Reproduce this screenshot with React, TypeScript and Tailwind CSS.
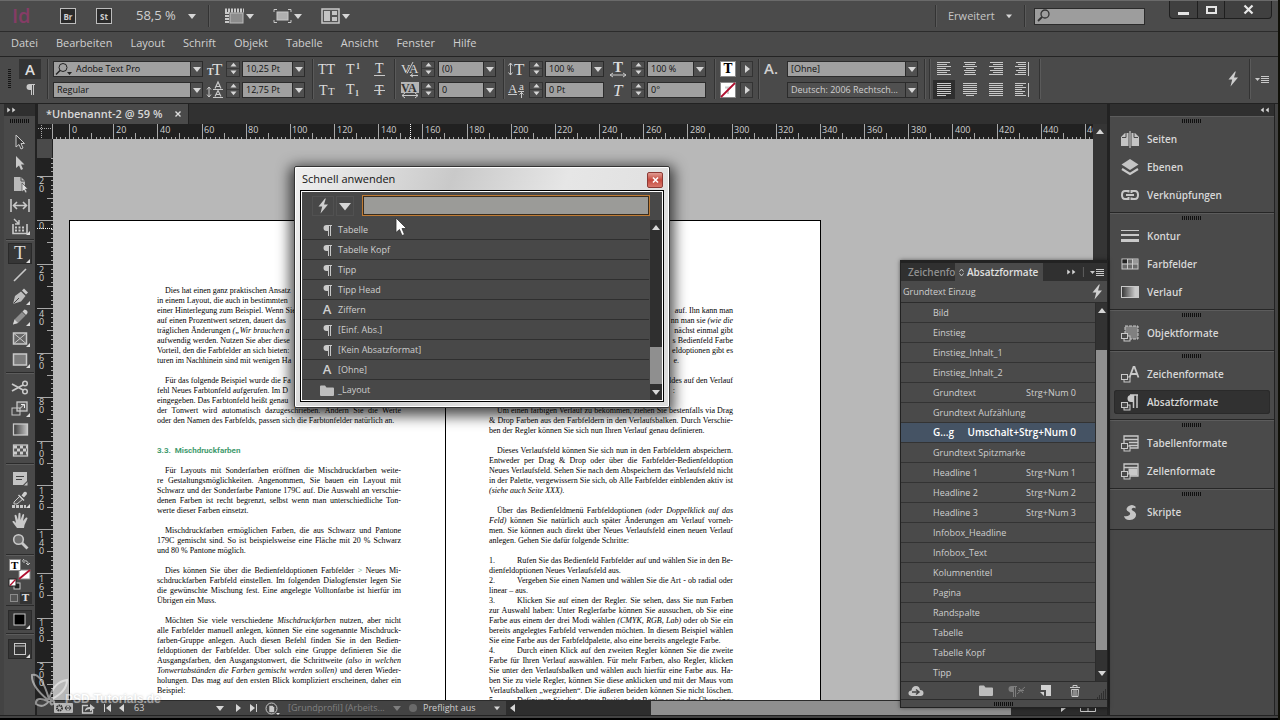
import type { ReactNode } from "react";
import clsx from "clsx";

const RULER_STEP = 2.2085;

const menus = ["Datei", "Bearbeiten", "Layout", "Schrift", "Objekt", "Tabelle", "Ansicht", "Fenster", "Hilfe"];

const quickApply = [
  { kind: "para", name: "Tabelle" },
  { kind: "para", name: "Tabelle Kopf" },
  { kind: "para", name: "Tipp" },
  { kind: "para", name: "Tipp Head" },
  { kind: "char", name: "Ziffern" },
  { kind: "para", name: "[Einf. Abs.]" },
  { kind: "para", name: "[Kein Absatzformat]" },
  { kind: "char", name: "[Ohne]" },
  { kind: "folder", name: "_Layout" },
];

const styles: { name: string; keys?: string; active?: boolean }[] = [
  { name: "Bild" },
  { name: "Einstieg" },
  { name: "Einstieg_Inhalt_1" },
  { name: "Einstieg_Inhalt_2" },
  { name: "Grundtext", keys: "Strg+Num 0" },
  { name: "Grundtext Aufzählung" },
  { name: "G...g", keys: "Umschalt+Strg+Num 0", active: true },
  { name: "Grundtext Spitzmarke" },
  { name: "Headline 1", keys: "Strg+Num 1" },
  { name: "Headline 2", keys: "Strg+Num 2" },
  { name: "Headline 3", keys: "Strg+Num 3" },
  { name: "Infobox_Headline" },
  { name: "Infobox_Text" },
  { name: "Kolumnentitel" },
  { name: "Pagina" },
  { name: "Randspalte" },
  { name: "Tabelle" },
  { name: "Tabelle Kopf" },
  { name: "Tipp" },
];

/* ---------- small drawings ---------- */

type Dir = "up" | "down" | "left" | "right";

const triPoints: Record<Dir, string> = {
  up: "0,6 4,1 8,6",
  down: "0,2 8,2 4,7",
  left: "6,0 6,8 1,4",
  right: "2,0 2,8 7,4",
};

function Tri({ dir, className = "h-2 w-2" }: { dir: Dir; className?: string }) {
  return (
    <svg viewBox="0 0 8 8" className={clsx("shrink-0 fill-[#d6d6d6]", className)} aria-hidden>
      <polygon points={triPoints[dir]} />
    </svg>
  );
}

function Icon({ w, h, className, children }: { w: number; h: number; className?: string; children: ReactNode }) {
  return (
    <svg
      width={w}
      height={h}
      viewBox={`0 0 ${w} ${h}`}
      className={clsx("shrink-0 overflow-visible", className)}
      fill="none"
      stroke="#c9c9c9"
      aria-hidden
    >
      {children}
    </svg>
  );
}

function Grip() {
  return <div className="h-[4px] w-[20px] bg-[repeating-linear-gradient(90deg,#101010_0_1px,transparent_1px_2px)]" />;
}

function Bolt() {
  return (
    <Icon w={12} h={16}>
      <path d="M8 0.500 L1.500 8.500 L5.200 8.500 L3.500 15.500 L11 6.500 L7 6.500 L8.800 0.500 Z" fill="#cfcfcf" stroke="none" />
    </Icon>
  );
}

function Pilcrow() {
  return (
    <Icon w={9} h={12}>
      <path d="M5 1 H3.500 A3 3 0 0 0 3.500 7 H5 Z" fill="#c9c9c9" stroke="none" />
      <path d="M3.500 1.500 H9 M5.500 1 V12 M7.500 1 V12" shapeRendering="crispEdges" />
    </Icon>
  );
}

function Folder() {
  return (
    <Icon w={14} h={11}>
      <path d="M0 10 V1.500 Q0 .5 1 .5 H5 L6.500 2.500 H13 Q14 2.500 14 3.500 V10 Q14 11 13 11 H1 Q0 11 0 10 Z" fill="#bdbdbd" stroke="none" />
    </Icon>
  );
}

function MenuLines() {
  return (
    <Icon w={14} h={9}>
      <path d="M0 3 H5 L2.500 6 Z" fill="#c9c9c9" stroke="none" />
      <path d="M6 1.500 H14 M6 3.500 H14 M6 5.500 H14 M6 7.500 H14" />
    </Icon>
  );
}

const alignRows: Record<string, [number, number][]> = {
  left: [[0, 13], [0, 10], [0, 14], [0, 9], [0, 13], [0, 10], [0, 14]],
  center: [[1, 12], [2, 10], [0, 14], [3, 8], [1, 12], [2, 10], [1, 12]],
  right: [[1, 13], [4, 10], [0, 14], [5, 9], [1, 13], [4, 10], [0, 14]],
  spine: [[1, 10], [3, 8], [0, 11], [4, 7], [1, 10], [3, 8], [0, 11]],
  justLeft: [[0, 14], [0, 14], [0, 14], [0, 14], [0, 14], [0, 14], [0, 9]],
  justCenter: [[0, 14], [0, 14], [0, 14], [0, 14], [0, 14], [0, 14], [3, 8]],
  justAll: [[0, 14], [0, 14], [0, 14], [0, 14], [0, 14], [0, 14], [0, 14]],
  outer: [[0, 11], [0, 8], [0, 11], [0, 7], [0, 10], [0, 8], [0, 11]],
};

function AlignIcon({ kind }: { kind: keyof typeof alignRows }) {
  return (
    <Icon w={15} h={14}>
      {alignRows[kind].map(([x, w], i) => (
        <path key={i} d={`M${x} ${i * 2 + 0.5} h${w}`} shapeRendering="crispEdges" />
      ))}
      {(kind === "spine" || kind === "outer") && <path d="M13.500 0 V14" />}
    </Icon>
  );
}

/* ---------- control bar ---------- */

function Combo({ label, value, className, dark, children }: { label: string; value: string; className?: string; dark?: boolean; children?: ReactNode }) {
  return (
    <div
      className={clsx(
        "flex h-[16px] items-stretch border border-[#2b2b2b]",
        dark ? "bg-[#505050] text-[#cfcfcf]" : "bg-[#a0a0a0] text-[#101010]",
        className,
      )}
    >
      {children}
      <select aria-label={label} defaultValue={value} className="min-w-0 flex-1 appearance-none px-[3px] text-[9px] leading-[14px] outline-none">
        <option>{value}</option>
      </select>
      <span className="flex w-3 items-center justify-center border-l border-[#2b2b2b] bg-[#505050]">
        <Tri dir="down" />
      </span>
    </div>
  );
}

function Field({ label, value, className }: { label: string; value: string; className?: string }) {
  return (
    <input
      aria-label={label}
      defaultValue={value}
      className={clsx("h-[16px] border border-[#2b2b2b] bg-[#a0a0a0] px-[3px] text-[9px] text-[#101010] outline-none", className)}
    />
  );
}

function Spinner({ label }: { label: string }) {
  return (
    <div className="flex h-[16px] w-[14px] flex-col border border-[#333] bg-[#4f4f4f]">
      <button aria-label={`${label} erhöhen`} className="flex flex-1 items-center justify-center">
        <Tri dir="up" className="h-[6px] w-[7px]" />
      </button>
      <button aria-label={`${label} verringern`} className="flex flex-1 items-center justify-center border-t border-[#3b3b3b]">
        <Tri dir="down" className="h-[6px] w-[7px]" />
      </button>
    </div>
  );
}

function Rows({ className, children }: { className?: string; children: ReactNode }) {
  return <div className={clsx("flex shrink-0 flex-col justify-center gap-[5px]", className)}>{children}</div>;
}

function Row({ className, children }: { className?: string; children: ReactNode }) {
  return <div className={clsx("flex h-[16px] items-center", className)}>{children}</div>;
}

function Divider({ className }: { className?: string }) {
  return <div className={clsx("w-[2px] shrink-0 self-stretch border-l border-[#333] bg-[#5a5a5a]", className)} />;
}

/* serif glyph used by the type icons */
function Glyph({ x, y, size, bold, italic, children }: { x: number; y: number; size: number; bold?: boolean; italic?: boolean; children: string }) {
  return (
    <text
      x={x}
      y={y}
      fontSize={size}
      fontFamily="'Liberation Serif', serif"
      fontWeight={bold ? 700 : 400}
      fontStyle={italic ? "italic" : "normal"}
      fill="#dcdcdc"
      stroke="none"
    >
      {children}
    </text>
  );
}

function TypeButton({ label, children }: { label: string; children: ReactNode }) {
  return (
    <button aria-label={label} className="flex w-[26px] items-center justify-center">
      {children}
    </button>
  );
}

function ControlBar() {
  return (
    <div className="flex h-[47px] shrink-0 items-stretch border-b border-[#222] bg-[#4a4a4a] pt-[2px] pb-[4px] pl-2">
      <div className="h-5 w-[3px] self-center bg-[repeating-linear-gradient(180deg,#151515_0_1px,transparent_1px_2px)]" />
      <div className="ml-2 flex w-[22px] flex-col">
        <button className="flex h-5 items-center justify-center bg-[#333] text-[15px] font-semibold text-[#dedede]">A</button>
        <button aria-label="Absatz" className="flex h-6 items-center justify-center">
          <Pilcrow />
        </button>
      </div>
      <Divider className="mr-1 ml-[6px]" />
      <Rows>
        <Combo label="Schrift" value="Adobe Text Pro" className="w-[150px]">
          <Icon w={18} h={14} className="ml-[1px]">
            <circle cx="8" cy="5.500" r="4" stroke="#222" />
            <path d="M5 8.500 L1 12.500" stroke="#222" strokeWidth="1.500" />
            <path d="M12 10 H17 L14.500 13 Z" fill="#222" stroke="none" />
          </Icon>
        </Combo>
        <Combo label="Schnitt" value="Regular" className="w-[150px]" />
      </Rows>
      <Rows className="ml-[3px]">
        <Row className="gap-[2px]">
          <Icon w={18} h={16}>
            <Glyph x={1} y={14} size={10} bold>T</Glyph>
            <Glyph x={6} y={14} size={17}>T</Glyph>
          </Icon>
          <Spinner label="Schriftgrad" />
          <Combo label="Schriftgrad" value="10,25 Pt" className="w-[63px]" />
        </Row>
        <Row className="gap-[2px]">
          <Icon w={18} h={16}>
            <path d="M3 5 V15 M1 7.500 L3 5 L5 7.500 M1 12.500 L3 15 L5 12.500 M7 7.500 H17 M7 15.500 H17" />
            <path d="M9 6.500 L12 0 L15 6.500 M10 4.500 H14 M9 14.500 L12 8.500 L15 14.500 M10 12.500 H14" strokeWidth="1.200" />
          </Icon>
          <Spinner label="Zeilenabstand" />
          <Combo label="Zeilenabstand" value="12,75 Pt" className="w-[63px]" />
        </Row>
      </Rows>
      <Divider className="ml-[7px]" />
      <Rows>
        <Row>
          <TypeButton label="Großbuchstaben">
            <Icon w={18} h={14}>
              <Glyph x={0} y={12} size={14}>TT</Glyph>
            </Icon>
          </TypeButton>
          <TypeButton label="Hochgestellt">
            <Icon w={16} h={14}>
              <Glyph x={1} y={12} size={14}>T</Glyph>
              <Glyph x={11} y={7} size={8} bold>1</Glyph>
            </Icon>
          </TypeButton>
          <TypeButton label="Unterstrichen">
            <Icon w={12} h={14}>
              <Glyph x={2} y={11} size={14}>T</Glyph>
              <path d="M1 13.500 H12" />
            </Icon>
          </TypeButton>
        </Row>
        <Row>
          <TypeButton label="Kapitälchen">
            <Icon w={18} h={14}>
              <Glyph x={1} y={12} size={14}>T</Glyph>
              <Glyph x={10} y={12} size={11}>T</Glyph>
            </Icon>
          </TypeButton>
          <TypeButton label="Tiefgestellt">
            <Icon w={16} h={14}>
              <Glyph x={1} y={11} size={14}>T</Glyph>
              <Glyph x={10} y={13} size={8} bold>1</Glyph>
            </Icon>
          </TypeButton>
          <TypeButton label="Durchgestrichen">
            <Icon w={12} h={14}>
              <Glyph x={2} y={12} size={14}>T</Glyph>
              <path d="M1 7.500 H12" />
            </Icon>
          </TypeButton>
        </Row>
      </Rows>
      <Divider className="ml-[2px]" />
      <Rows className="ml-[5px]">
        <Row className="gap-[2px]">
          <Icon w={18} h={16}>
            <Glyph x={0} y={12} size={13}>V</Glyph>
            <Glyph x={8} y={12} size={13}>A</Glyph>
            <path d="M6 12.500 L12 1 M9 14.500 H17 M12 12.500 L9.500 14.500 L12 16" />
          </Icon>
          <Spinner label="Kerning" />
          <Combo label="Kerning" value="(0)" className="ml-[1px] w-[58px]" />
        </Row>
        <Row className="gap-[2px]">
          <Icon w={18} h={16}>
            <rect x="0" y="0" width="18" height="11" fill="#b5b5b5" stroke="none" />
            <text x="0" y="10" fontSize="12" fontFamily="'Liberation Serif', serif" fontWeight="700" fill="#333" stroke="none">
              VA
            </text>
            <path d="M1 13.500 H17 M4 11 L1 13.500 L4 16 M14 11 L17 13.500 L14 16" />
          </Icon>
          <Spinner label="Laufweite" />
          <Combo label="Laufweite" value="0" className="ml-[1px] w-[58px]" />
        </Row>
      </Rows>
      <Divider className="mr-[3px] ml-[7px]" />
      <Rows>
        <Row className="gap-[2px]">
          <Icon w={19} h={16}>
            <path d="M2.500 2 V14 M.5 4.500 L2.500 2 L4.500 4.500 M.5 11.500 L2.500 14 L4.500 11.500" />
            <Glyph x={6} y={14} size={17}>T</Glyph>
          </Icon>
          <Spinner label="Vertikal skalieren" />
          <Combo label="Vertikal skalieren" value="100 %" className="w-[59px]" />
        </Row>
        <Row className="gap-[2px]">
          <Icon w={19} h={16}>
            <Glyph x={0} y={11} size={13}>A</Glyph>
            <Glyph x={11} y={8} size={11}>a</Glyph>
            <path d="M0 12.500 H9 M10 9.500 H16 M13.500 16 V10 M11.500 12.500 L13.500 10.500 L15.500 12.500" />
          </Icon>
          <Spinner label="Grundlinienversatz" />
          <Field label="Grundlinienversatz" value="0 Pt" className="w-[59px]" />
        </Row>
      </Rows>
      <Rows className="ml-[5px]">
        <Row className="gap-[2px]">
          <Icon w={20} h={16}>
            <Glyph x={4} y={11} size={15} bold>T</Glyph>
            <path d="M1 14 H17 M4 12 L1 14 L4 16 M14 12 L17 14 L14 16" />
          </Icon>
          <Spinner label="Horizontal skalieren" />
          <Combo label="Horizontal skalieren" value="100 %" className="w-[59px]" />
        </Row>
        <Row className="gap-[2px]">
          <Icon w={20} h={16}>
            <Glyph x={4} y={14} size={17} italic>T</Glyph>
          </Icon>
          <Spinner label="Neigen" />
          <Field label="Neigen" value="0°" className="w-[59px]" />
        </Row>
      </Rows>
      <Divider className="ml-2" />
      <Rows className="ml-[4px]">
        <Row className="gap-1">
          <span className="flex h-4 w-4 items-center justify-center border border-[#888] bg-white font-['DejaVu_Serif',serif] text-[12px] leading-none font-bold text-black">T</span>
          <button aria-label="Flächenfarbe" className="flex h-4 w-[13px] items-center justify-center border border-[#333] bg-[#4f4f4f]">
            <Tri dir="right" />
          </button>
        </Row>
        <Row className="gap-1">
          <Icon w={16} h={16}>
            <rect x=".5" y=".5" width="15" height="15" fill="#fff" stroke="#888" />
            <path d="M5 5.500 H11 M8 5.500 V12" stroke="#ccc" strokeWidth="2" />
            <path d="M1 15 L15 1" stroke="#b01030" strokeWidth="1.800" />
          </Icon>
          <button aria-label="Konturfarbe" className="flex h-4 w-[13px] items-center justify-center border border-[#333] bg-[#4f4f4f]">
            <Tri dir="right" />
          </button>
        </Row>
      </Rows>
      <Divider className="ml-[5px]" />
      <Rows className="ml-1">
        <Row>
          <span className="w-[23px] text-[15px] font-semibold text-[#d0d0d0]">A.</span>
          <Combo label="Zeichenformat" value="[Ohne]" className="w-[131px]" />
        </Row>
        <Row className="justify-end">
          <Combo label="Sprache" value="Deutsch: 2006 Rechtsch..." dark className="w-[131px]" />
        </Row>
      </Rows>
      <Divider className="mr-[3px] ml-[6px]" />
      <Divider />
      <Rows>
        <Row>
          {["left", "center", "right", "spine"].map((k) => (
            <button key={k} aria-label={k} className="flex h-[19px] w-[26px] items-center justify-center">
              <AlignIcon kind={k} />
            </button>
          ))}
        </Row>
        <Row>
          {["justLeft", "justCenter", "justAll", "outer"].map((k) => (
            <button
              key={k}
              aria-label={k}
              className={clsx("flex h-[19px] w-[26px] items-center justify-center", k === "justLeft" && "border-x-2 border-[#4a4a4a] bg-[#2e2e2e]")}
            >
              <AlignIcon kind={k} />
            </button>
          ))}
        </Row>
      </Rows>
      <Divider className="ml-1" />
      <div className="mr-[9px] ml-auto flex shrink-0 items-center">
        <button aria-label="Schnell anwenden">
          <Bolt />
        </button>
        <Divider className="mr-1 ml-[10px]" />
        <button aria-label="Bedienfeldmenü">
          <MenuLines />
        </button>
      </div>
    </div>
  );
}

/* ---------- title bar and menu ---------- */

function TitleBar() {
  return (
    <header className="flex h-8 shrink-0 items-stretch border-t border-b border-t-[#6a6a6a] border-b-[#2c2c2c] bg-[#4b4b4b]">
      <div className="flex flex-1 items-center pl-3 text-[#cfcfcf]">
        <span className="w-12 text-[20px] leading-none font-semibold text-[#853c66]">Id</span>
        <button className="h-4 w-4 border border-[#bdbdbd] bg-[#2a2a2a] text-[8px] leading-[13px] font-bold">Br</button>
        <button className="ml-5 h-4 w-4 border border-[#bdbdbd] bg-[#2a2a2a] text-[8px] leading-[13px] font-bold">St</button>
        <button className="ml-6 flex w-[60px] items-center justify-between text-[13px]">
          58,5 % <Tri dir="down" />
        </button>
        <Divider className="my-1 ml-3" />
        <button aria-label="Anzeigeoptionen" className="ml-[15px] flex items-center gap-[2px]">
          <Icon w={19} h={16}>
            <rect x="5" y="5" width="13" height="10" fill="#8c8c8c" stroke="#bbb" />
            <path d="M0 2.500 H19" strokeWidth="4" strokeDasharray="2 1" />
            <path d="M2 4 V16" strokeWidth="4" strokeDasharray="2 1" />
          </Icon>
          <Tri dir="down" />
        </button>
        <button aria-label="Bildschirmmodus" className="ml-[19px] flex items-center gap-[2px]">
          <Icon w={19} h={16}>
            <rect x="4" y="4" width="11" height="8" fill="#b0b0b0" />
            <path d="M1 4 V1.500 H4 M15 1.500 H18 V4 M18 12 V14.500 H15 M4 14.500 H1 V12" />
          </Icon>
          <Tri dir="down" />
        </button>
        <button aria-label="Dokumente anordnen" className="ml-[19px] flex items-center gap-[2px]">
          <Icon w={19} h={16}>
            <rect x="1" y="1" width="17" height="14" fill="#555" strokeWidth="1.500" />
            <rect x="3" y="3" width="6" height="10" fill="#c4c4c4" stroke="none" />
            <rect x="11" y="3" width="5" height="4" fill="#c4c4c4" stroke="none" />
            <rect x="11" y="9" width="5" height="4" fill="#c4c4c4" stroke="none" />
          </Icon>
          <Tri dir="down" />
        </button>
      </div>
      <div className="flex items-center text-[11px] text-[#c6c6c6]">
        <Divider className="my-1" />
        <button className="ml-[11px] flex w-[64px] items-center justify-between">
          Erweitert <Tri dir="down" className="h-[6px] w-[6px]" />
        </button>
        <Divider className="my-1 ml-3" />
        <label className="ml-2 flex h-[17px] w-[111px] items-center border border-[#2b2b2b] bg-[#9d9d9d]">
          <Icon w={15} h={14} className="ml-[1px]">
            <circle cx="9" cy="5" r="4" stroke="#333" strokeWidth="1.300" />
            <path d="M6 8 L2 12" stroke="#333" strokeWidth="1.800" />
          </Icon>
          <input aria-label="Suche" type="search" className="w-full min-w-0 outline-none" />
        </label>
      </div>
      <div className="mr-[6px] ml-6 flex h-[18px] w-[103px] rounded-b-[4px] border border-t-0 border-[#1f1f1f] bg-[#404040]">
        <button aria-label="Minimieren" className="flex w-7 items-center justify-center border-r border-[#1f1f1f]">
          <span className="mt-2 h-[3px] w-[11px] bg-[#e4e4e4]" />
        </button>
        <button aria-label="Maximieren" className="flex w-[27px] items-center justify-center border-r border-[#1f1f1f]">
          <span className="h-2 w-[11px] border-2 border-[#e4e4e4]" />
        </button>
        <button aria-label="Schließen" className="flex flex-1 items-center justify-center">
          <Icon w={11} h={9}>
            <path d="M1.500 .5 L9.500 8.500 M9.500 .5 L1.500 8.500" stroke="#e8e8e8" strokeWidth="2.200" />
          </Icon>
        </button>
      </div>
    </header>
  );
}

function MenuBar() {
  return (
    <nav className="flex h-[25px] shrink-0 items-center gap-[18px] border-b border-[#242424] bg-[#4a4a4a] pb-[2px] pl-[11px] text-[11px] text-[#d0d0d0]">
      {menus.map((m) => (
        <button key={m} className="leading-4">
          {m}
        </button>
      ))}
    </nav>
  );
}

/* ---------- tool box ---------- */

const corner = <path d="M17 16 V12 L13 16 Z" transform="translate(3 3)" fill="#ddd" stroke="none" />;

const toolGroups: { name: string; active?: boolean; art: ReactNode }[][] = [
  [
    { name: "Auswahl", art: <path d="M6 3 V15 L9 12.500 L11 17 L13 16 L11 11.500 H14.500 Z" fill="#3a3a3a" /> },
    { name: "Direktauswahl", art: <path d="M6 3 V15 L9 12.500 L11 17 L13 16 L11 11.500 H14.500 Z" fill="#c9c9c9" stroke="none" /> },
    {
      name: "Seite",
      art: (
        <>
          <path d="M4 3 H11 L15 7 V17 H4 Z" fill="#b9b9b9" stroke="none" />
          <path d="M11 3 V7 H15" stroke="#4a4a4a" />
          <path d="M12 9 V18 L14 16 L15.500 19 L17 18 L15.500 15 H18 Z" fill="#ddd" stroke="#4a4a4a" strokeWidth=".7" />
        </>
      ),
    },
    { name: "Lücke", art: <path d="M1 4 V17 M19 4 V17 M3.500 10.500 H16.500 M7 7 L3.500 10.500 L7 14 M13 7 L16.500 10.500 L13 14" strokeWidth="1.600" /> },
    {
      name: "Inhaltsaufnahme",
      art: (
        <>
          <path d="M3 8 V17.500 H17 V8" strokeWidth="1.600" />
          <path d="M5 11.500 H15 M5 14.500 H15" strokeWidth="2" strokeDasharray="2 1.500" />
          <path d="M4 3 L9 8 M9 4 V8 H5" strokeWidth="1.400" />
          {corner}
        </>
      ),
    },
  ],
  [
    {
      name: "Text",
      active: true,
      art: (
        <>
          <Glyph x={4} y={15} size={19}>T</Glyph>
          {corner}
        </>
      ),
    },
    { name: "Linie", art: <path d="M4 16 L16 4" strokeWidth="1.600" /> },
    {
      name: "Zeichenstift",
      art: (
        <>
          <path d="M3 18 L5 10 L11 5.500 L15.500 10 L11 15.500 Z" fill="#bdbdbd" stroke="none" />
          <path d="M12 4.500 L14 2.500 L18 6.500 L16 8.500 Z" fill="#c9c9c9" stroke="none" />
          <path d="M3.500 17.500 L9 12" stroke="#444" />
          {corner}
        </>
      ),
    },
    {
      name: "Buntstift",
      art: (
        <>
          <path d="M3 17.500 L4.500 12.500 L12 5 L15.500 8.500 L8 16 Z" fill="#8f8f8f" stroke="none" />
          <path d="M3 17.500 L4.500 12.500 L8 16 Z" fill="#d5d5d5" stroke="none" />
          <path d="M12.500 4.500 L14.500 2.500 Q18 3 17.500 6 L16 8 Z" fill="#cfcfcf" stroke="none" />
          {corner}
        </>
      ),
    },
    {
      name: "Rechteckrahmen",
      art: (
        <>
          <rect x="3.500" y="5" width="13" height="11" fill="#686868" strokeWidth="1.500" />
          <path d="M4 5.500 L16 15.500 M16 5.500 L4 15.500" />
          {corner}
        </>
      ),
    },
    {
      name: "Rechteck",
      art: (
        <>
          <rect x="3.500" y="5" width="13" height="11" fill="#7d7d7d" strokeWidth="1.500" />
          {corner}
        </>
      ),
    },
  ],
  [
    {
      name: "Schere",
      art: (
        <>
          <circle cx="15" cy="6.500" r="2.300" strokeWidth="1.500" />
          <circle cx="15" cy="14.500" r="2.300" strokeWidth="1.500" />
          <path d="M13 8 L2 14 M13 13 L2 7" strokeWidth="1.800" />
        </>
      ),
    },
    {
      name: "Frei transformieren",
      art: (
        <>
          <rect x="7" y="4" width="10" height="9" fill="#5c5c5c" strokeWidth="1.300" />
          <rect x="2" y="10" width="8" height="7" />
          <path d="M10 10.500 L14 6.500 M11 6.500 H14.500 V10" stroke="#eee" />
          {corner}
        </>
      ),
    },
    {
      name: "Verlauf",
      art: (
        <>
          <defs>
            <linearGradient id="toolGradient">
              <stop offset="0" stopColor="#3a3a3a" />
              <stop offset="1" stopColor="#c4c4c4" />
            </linearGradient>
          </defs>
          <rect x="3.500" y="5" width="14" height="11" fill="url(#toolGradient)" strokeWidth="1.300" />
        </>
      ),
    },
    {
      name: "Weiche Verlaufskante",
      art: (
        <>
          <rect x="3.500" y="5" width="14" height="11" fill="#555" strokeWidth="1.300" />
          <path d="M4 7 H17 M4 13 H17" stroke="#ccc" strokeWidth="3" strokeDasharray="3 3" />
          <path d="M7 10 H17" stroke="#ccc" strokeWidth="3" strokeDasharray="3 3" />
        </>
      ),
    },
  ],
  [
    {
      name: "Notiz",
      art: (
        <>
          <path d="M3 4 H17 V13 L13 17 H3 Z" fill="#c3c3c3" stroke="none" />
          <path d="M6 8.500 H14 M6 11.500 H12" stroke="#444" />
          <path d="M17.500 14 L14 17.500 H17.500 Z" fill="#c3c3c3" stroke="none" />
        </>
      ),
    },
    {
      name: "Pipette",
      art: (
        <>
          <path d="M4 13 L10 7 L13 10 L7 15 H4 Z" fill="#555" />
          <path d="M9 5.500 L14.500 11 L13.500 12 L8 6.500 Z M11.500 6.500 L14 3 Q17 2 17 5 L14 8.500 Z" fill="#cfcfcf" stroke="none" />
          <path d="M2 17.500 H16" strokeWidth="3" strokeDasharray="3 1" />
          {corner}
        </>
      ),
    },
    {
      name: "Hand",
      art: (
        <path
          d="M7 18 L2.500 12 Q2 10.500 4 11 L6 13 L4.500 5.500 Q5.500 4 6.500 5.500 L8 10 L8.500 3.500 Q9.500 2 10.500 3.500 V10 L12.500 4.500 Q14 3.500 14.200 5 L13 11 L16 7.500 Q17.500 7 17.500 8.500 L14.500 15 L14 18 Z"
          fill="#c9c9c9"
          stroke="none"
        />
      ),
    },
    {
      name: "Zoom",
      art: (
        <>
          <circle cx="8.500" cy="8.500" r="4.800" fill="#6e6e6e" strokeWidth="1.600" />
          <path d="M12 12 L17.500 17.500" strokeWidth="2.800" />
        </>
      ),
    },
  ],
];

function ToolDivider() {
  return <div className="my-[3px] h-[1px] w-[28px] bg-[#2b2b2b] shadow-[0_1px_0_#5c5c5c]" />;
}

function ToolBox() {
  return (
    <aside className="flex w-[31px] shrink-0 flex-col bg-[#494949]">
      <div className="flex h-3 items-center bg-[#2f2f2f] pl-[2px]">
        <Tri dir="right" className="h-[6px] w-[5px]" />
        <Tri dir="right" className="h-[6px] w-[5px]" />
      </div>
      <div className="flex h-[15px] justify-center pt-[3px]">
        <Grip />
      </div>
      <div className="flex flex-col items-center">
        {toolGroups.map((group, i) => (
          <div key={i} className="flex flex-col items-center">
            {group.map((t) => (
              <button
                key={t.name}
                aria-label={t.name}
                className={clsx("flex h-[21px] w-6 items-center justify-center", t.active && "border border-[#2a2a2a] bg-[#363636]")}
              >
                <Icon w={20} h={20}>
                  {t.art}
                </Icon>
              </button>
            ))}
            <ToolDivider />
          </div>
        ))}
        <Icon w={26} h={33}>
          <rect x="12" y="12" width="11" height="9" fill="#fff" stroke="#888" />
          <path d="M12 21 L23 12" stroke="#b01030" strokeWidth="1.800" />
          <rect x="2.500" y="1.500" width="11" height="11" fill="#fff" stroke="#888" />
          <text x="4" y="11" fontSize="11" fontFamily="'Liberation Serif', serif" fontWeight="700" fill="#000" stroke="none">
            T
          </text>
          <path d="M17 3 Q21 2 21 6 M17 1 L15.500 3 L17.500 5 M19 5 L21 7 L23 5" />
          <rect x="7" y="25" width="6" height="6" fill="#222" />
          <rect x="2" y="21" width="7" height="7" fill="#fff" stroke="#222" />
          <path d="M3 27.500 L8.500 21.500" stroke="#b01030" strokeWidth="1.300" />
        </Icon>
        <div className="flex h-[14px] items-center">
          <button aria-label="Format wirkt auf Container" className="flex h-3 w-3 items-center justify-center">
            <span className="h-2 w-2 border border-[#8c8c8c] bg-[#555]" />
          </button>
          <button className="h-3 w-3 bg-[#333] font-['DejaVu_Serif',serif] text-[10px] leading-none font-bold text-[#ddd]">T</button>
        </div>
        <div className="mb-1 h-[1px] w-[28px] bg-[#2b2b2b]" />
        <button aria-label="Farbe anwenden" className="flex h-5 w-6 items-center justify-center border border-[#2a2a2a] bg-[#363636]">
          <Icon w={20} h={20}>
            <rect x="4" y="4" width="11" height="11" fill="#000" />
            {corner}
          </Icon>
        </button>
        <ToolDivider />
        <button aria-label="Normale Ansicht" className="mt-[2px] flex h-5 w-6 items-center justify-center border border-[#2a2a2a] bg-[#363636]">
          <Icon w={20} h={20}>
            <rect x="4.500" y="4.500" width="11" height="11" />
            <path d="M5 7 H15" />
            {corner}
          </Icon>
        </button>
      </div>
    </aside>
  );
}

/* ---------- rulers ---------- */

const majors = Array.from({ length: 24 }, (_, i) => i * 20);

function HorizontalRuler() {
  const zero = 16.5;
  return (
    <svg className="h-[15px] min-w-0 flex-1 bg-[#212121]" stroke="#a8a8a8" fontFamily="'Open Sans', sans-serif" fontSize="9">
      {Array.from({ length: 240 }, (_, i) => (i - 3) * 2).map((mm) => {
        const x = Math.round(zero + mm * RULER_STEP - 0.5) + 0.5;
        const len = mm % 20 === 0 ? 15 : mm % 10 === 0 ? 6 : 2;
        return <path key={mm} d={`M${x} 15 v${-len}`} />;
      })}
      <path d="M357.500 0 V15" strokeDasharray="1 1" stroke="#fff" />
      {majors.map((mm) => (
        <text key={mm} x={Math.round(zero + mm * RULER_STEP) + 2} y="9" fill="#d0d0d0" stroke="none">
          {mm}
        </text>
      ))}
    </svg>
  );
}

function VerticalRuler() {
  const zero = 81.5;
  return (
    <div className="relative w-4 shrink-0 overflow-hidden bg-[#212121]">
      <svg className="h-full w-4" stroke="#a8a8a8">
        <rect x="0" y="0" width="15" height="19" fill="#4a4a4a" stroke="none" />
        {Array.from({ length: 160 }, (_, i) => (i - 14) * 2).map((mm) => {
          const y = Math.round(zero + mm * RULER_STEP - 0.5) + 0.5;
          const len = mm % 20 === 0 ? 16 : mm % 10 === 0 ? 6 : 2;
          return <path key={mm} d={`M16 ${y} h${-len}`} />;
        })}
        <path d="M0 89.500 H16" strokeDasharray="1 1" stroke="#fff" />
      </svg>
      {[-20, ...majors.slice(0, 11)].map((mm) => (
        <span
          key={mm}
          className="absolute left-[2px] w-[6px] text-[9px] leading-[8px] break-all text-[#d0d0d0]"
          style={{ top: Math.round(zero + mm * RULER_STEP) + 1 }}
        >
          {Math.abs(mm)}
        </span>
      ))}
    </div>
  );
}

/* ---------- document ---------- */

function Line({ align = "justify", indent, children }: { align?: "justify" | "left" | "right"; indent?: boolean; children: ReactNode }) {
  return (
    <div
      className={clsx(
        "h-[10px] leading-[10px] whitespace-nowrap",
        align === "justify" && "text-justify [text-align-last:justify]",
        align === "right" && "text-right",
        indent && "pl-2",
      )}
    >
      {children}
    </div>
  );
}

/* every line but the last one fills the column */
function Para({ lines, indent = true, align, full }: { lines: ReactNode[]; indent?: boolean; align?: "left" | "right"; full?: boolean }) {
  return (
    <div>
      {lines.map((l, i) => (
        <Line key={i} indent={indent && i === 0} align={align ?? (i === lines.length - 1 && !full ? "left" : "justify")}>
          {l}
        </Line>
      ))}
    </div>
  );
}

function Step({ n, lines, full }: { n: number; lines: ReactNode[]; full?: boolean }) {
  const [first, ...rest] = lines;
  return (
    <>
      <Line>
        <span className="inline-block w-7">{n}.</span>
        {first}
      </Line>
      {rest.length > 0 && <Para indent={false} full={full} lines={rest} />}
    </>
  );
}

function LeftPage() {
  return (
    <div className="flex w-[376px] shrink-0 flex-col gap-[10px] border-r border-black pt-[65px] pr-[44px] pl-[87px]">
      <Para
        align="left"
        lines={[
          "Dies hat einen ganz praktischen Ansatz",
          "in einem Layout, die auch in bestimmten",
          "einer Hinterlegung zum Beispiel. Wenn Sie",
          "auf einen Prozentwert setzen, dauert das",
          <>
            träglichen Änderungen <i>(„Wir brauchen a</i>
          </>,
          "aufwendig werden. Nutzen Sie aber diese",
          "Vorteil, den die Farbfelder an sich bieten:",
          "turen im Nachhinein sind mit wenigen Ha",
        ]}
      />
      <div>
        <Para
          align="left"
          lines={[
            "Für das folgende Beispiel wurde die Fa",
            "fehl Neues Farbtonfeld aufgerufen. Im D",
            "eingegeben. Das Farbtonfeld heißt genau",
          ]}
        />
        <Para
          indent={false}
          lines={[
            "der Tonwert wird automatisch dazugeschrieben. Ändern Sie die Werte",
            "oder den Namen des Farbfelds, passen sich die Farbtonfelder natürlich an.",
          ]}
        />
      </div>
      <h2 className="mt-[10px] h-[10px] font-[Roboto,sans-serif] text-[8px] leading-[10px] font-bold text-[#3f9a6d]">
        3.3.&nbsp; Mischdruckfarben
      </h2>
      <Para
        lines={[
          "Für Layouts mit Sonderfarben eröffnen die Mischdruckfarben weite-",
          "re Gestaltungsmöglichkeiten. Angenommen, Sie bauen ein Layout mit",
          "Schwarz und der Sonderfarbe Pantone 179C auf. Die Auswahl an verschie-",
          "denen Farben ist recht begrenzt, selbst wenn man unterschiedliche Ton-",
          "werte dieser Farben einsetzt.",
        ]}
      />
      <Para
        lines={[
          "Mischdruckfarben ermöglichen Farben, die aus Schwarz und Pantone",
          "179C gemischt sind. So ist beispielsweise eine Fläche mit 20 % Schwarz",
          "und 80 % Pantone möglich.",
        ]}
      />
      <Para
        lines={[
          <>
            Dies können Sie über die Bedienfeldoptionen Farbfelder <span className="text-[#3f9a6d]">&gt;</span> Neues Mi-
          </>,
          "schdruckfarben Farbfeld einstellen. Im folgenden Dialogfenster legen Sie",
          "die gewünschte Mischung fest. Eine angelegte Volltonfarbe ist hierfür im",
          "Übrigen ein Muss.",
        ]}
      />
      <Para
        lines={[
          <>
            Möchten Sie viele verschiedene <i>Mischdruckfarben</i> nutzen, aber nicht
          </>,
          "alle Farbfelder manuell anlegen, können Sie eine sogenannte Mischdruck-",
          "farben-Gruppe anlegen. Auch diesen Befehl finden Sie in den Bedien-",
          "feldoptionen der Farbfelder. Über solch eine Gruppe definieren Sie die",
          <>
            Ausgangsfarben, den Ausgangstonwert, die Schrittweite <i>(also in welchen</i>
          </>,
          <>
            <i>Tonwertabständen die Farben gemischt werden sollen)</i> und deren Wieder-
          </>,
          "holungen. Das mag auf den ersten Blick kompliziert erscheinen, daher ein",
          "Beispiel:",
        ]}
      />
    </div>
  );
}

function RightPage() {
  return (
    <div className="flex w-[375px] shrink-0 flex-col gap-[10px] pt-[85px] pr-[88px] pl-[43px]">
      <Para
        align="right"
        lines={[
          "auf. Ihn kann man",
          <>
            nn man sie <i>(wie die</i>
          </>,
          "nächst einmal gibt",
          "s Bedienfeld Farbe",
          "eldoptionen gibt es",
          <span className="pr-[54px]">e.</span>,
        ]}
      />
      <Para align="right" lines={["ldes auf den Verlauf", <span className="pr-[58px]">:</span>]} />
      <Para
        lines={[
          "Um einen farbigen Verlauf zu bekommen, ziehen Sie bestenfalls via Drag",
          "& Drop Farben aus den Farbfeldern in den Verlaufsbalken. Durch Verschie-",
          "ben der Regler können Sie sich nun Ihren Verlauf genau definieren.",
        ]}
      />
      <Para
        lines={[
          "Dieses Verlaufsfeld können Sie sich nun in den Farbfeldern abspeichern.",
          "Entweder per Drag & Drop oder über die Farbfelder-Bedienfeldoption",
          "Neues Verlaufsfeld. Sehen Sie nach dem Abspeichern das Verlaufsfeld nicht",
          "in der Palette, vergewissern Sie sich, ob Alle Farbfelder einblenden aktiv ist",
          <i>(siehe auch Seite XXX).</i>,
        ]}
      />
      <Para
        lines={[
          <>
            Über das Bedienfeldmenü Farbfeldoptionen <i>(oder Doppelklick auf das</i>
          </>,
          <>
            <i>Feld)</i> können Sie natürlich auch später Änderungen am Verlauf vorneh-
          </>,
          "men. Sie können auch direkt über Neues Verlaufsfeld einen neuen Verlauf",
          "anlegen. Gehen Sie dafür folgende Schritte:",
        ]}
      />
      <div>
        <Step n={1} lines={["Rufen Sie das Bedienfeld Farbfelder auf und wählen Sie in den Be-", "dienfeldoptionen Neues Verlaufsfeld aus."]} />
        <Step n={2} lines={["Vergeben Sie einen Namen und wählen Sie die Art - ob radial oder", "linear – aus."]} />
        <Step
          n={3}
          lines={[
            "Klicken Sie auf einen der Regler. Sie sehen, dass Sie nun Farben",
            "zur Auswahl haben: Unter Reglerfarbe können Sie aussuchen, ob Sie eine",
            <>
              Farbe aus einem der drei Modi wählen <i>(CMYK, RGB, Lab)</i> oder ob Sie ein
            </>,
            "bereits angelegtes Farbfeld verwenden möchten. In diesem Beispiel wählen",
            "Sie eine Farbe aus der Farbfeldpalette, also eine bereits angelegte Farbe.",
          ]}
        />
        <Step
          n={4}
          full
          lines={[
            "Durch einen Klick auf den zweiten Regler können Sie die zweite",
            "Farbe für Ihren Verlauf auswählen. Für mehr Farben, also Regler, klicken",
            "Sie unter den Verlaufsbalken und wählen auch hierfür eine Farbe aus. Ha-",
            "ben Sie zu viele Regler, können Sie diese anklicken und mit der Maus vom",
            "Verlaufsbalken „wegziehen“. Die äußeren beiden können Sie nicht löschen.",
          ]}
        />
        <Step n={5} lines={["Definieren Sie die genaue Position der Regler sowie der Übergänge."]} />
      </div>
    </div>
  );
}

function StatusBar() {
  return (
    <footer className="flex h-[15px] shrink-0 items-center border-t border-[#2b2b2b] bg-[#434343] text-[9px] text-[#cfcfcf]">
      <div className="flex w-[469px] shrink-0 items-center pl-[17px]">
        <Icon w={19} h={10}>
          <rect x="0" y="0" width="19" height="10" rx="1" fill="#b8b8b8" stroke="none" />
          <circle cx="5.500" cy="5" r="2.500" stroke="#333" strokeWidth="2" strokeDasharray="1.500 .6" />
          <path d="M11 5 H17 M13 2.500 L11 5 L13 7.500 M15 2.500 L17 5 L15 7.500" stroke="#333" />
        </Icon>
        <Icon w={15} h={11} className="ml-2">
          <path d="M7 2.500 H1.500 V10 H11.500 V7" strokeWidth="1.300" />
          <path d="M4 8 Q4 4 9 4 V1 L14 5 L9 8.500 V6 Q6 6 4 8 Z" fill="#c9c9c9" stroke="none" />
        </Icon>
        <button aria-label="Erste Seite" className="ml-2 flex items-center">
          <span className="h-2 w-[1px] bg-[#cfcfcf]" />
          <Tri dir="left" />
        </button>
        <button aria-label="Vorherige Seite" className="ml-[5px]">
          <Tri dir="left" />
        </button>
        <label className="ml-2 flex w-[90px] items-center justify-between">
          <input aria-label="Seite" defaultValue="63" className="w-10 outline-none" />
          <Tri dir="down" />
        </label>
        <button aria-label="Nächste Seite" className="ml-[10px]">
          <Tri dir="right" />
        </button>
        <button aria-label="Letzte Seite" className="ml-[6px] flex items-center">
          <Tri dir="right" />
          <span className="h-2 w-[1px] bg-[#cfcfcf]" />
        </button>
        <Icon w={15} h={13} className="ml-2">
          <circle cx="6.500" cy="6.500" r="5.500" />
          <path d="M4 3.500 H7.500 L9.500 5.500 V10.500 H4 Z" fill="#c9c9c9" stroke="#444" strokeWidth=".6" />
          <path d="M11 11 H15 L13 13 Z" fill="#ddd" stroke="none" />
        </Icon>
        <button className="ml-2 flex w-[113px] items-center justify-between text-[#808080]">
          [Grundprofil] (Arbeits... <Tri dir="down" className="h-2 w-2 opacity-40" />
        </button>
        <span className="ml-2 h-2 w-2 rounded-full bg-[#6a6a6a]" />
        <button className="ml-[6px] flex flex-1 items-center justify-between pr-[6px]">
          Preflight aus <Tri dir="down" className="h-[6px] w-[6px]" />
        </button>
      </div>
      <div className="flex h-full flex-1 items-center bg-[#2d2d2d] pl-[3px]">
        <Tri dir="left" />
        <div className="ml-[134px] h-full w-[360px] bg-[#8f8f8f]" />
        <Tri dir="right" className="ml-[48px] h-2 w-2" />
        <Icon w={16} h={8} className="ml-[13px]">
          <path d="M.5 0 V7.500 H15.500 V0 M8 0 V7" />
        </Icon>
      </div>
    </footer>
  );
}

function DocumentWindow() {
  return (
    <main className="flex min-w-0 flex-1 flex-col border-l-2 border-[#222] bg-[#2f2f2f]">
      <div className="flex h-5 shrink-0 bg-[#313131]">
        <div className="flex w-[152px] items-center justify-between border-x border-[#222] bg-[#4a4a4a] pr-[7px] pl-2 text-[11px] font-semibold text-[#d8d8d8]">
          <span>*Unbenannt-2 @ 59 %</span>
          <button aria-label="Dokument schließen">
            <Icon w={6} h={6}>
              <path d="M.5 .5 L5.500 5.500 M5.500 .5 L.5 5.500" stroke="#ddd" strokeWidth="1.400" />
            </Icon>
          </button>
        </div>
      </div>
      <div className="flex min-h-0 flex-1">
        <div className="flex min-w-0 flex-1 flex-col">
          <div className="flex shrink-0">
            <svg className="h-[15px] w-4 bg-[#212121]" stroke="#aaa" fill="none">
              <path d="M1 4.500 H16 M4.500 1 V15" strokeDasharray="1 1" />
              <path d="M15.500 0 V15" />
            </svg>
            <HorizontalRuler />
          </div>
          <div className="flex min-h-0 flex-1">
            <VerticalRuler />
            <div className="min-w-0 flex-1 overflow-hidden bg-[#b8b8b8] pt-[81px] pl-4">
              <div className="flex w-[752px] border border-black bg-white pb-20 font-['Liberation_Serif',serif] text-[8px] text-black">
                <LeftPage />
                <RightPage />
              </div>
            </div>
          </div>
        </div>
        <div className="flex w-[14px] shrink-0 justify-center bg-[#353535] pt-1">
          <Tri dir="up" />
        </div>
      </div>
      <StatusBar />
    </main>
  );
}

/* ---------- dock ---------- */

/* overlapping squares in the corner of every style icon */
const stack = (
  <>
    <rect x="3" y="12" width="6" height="5" fill="#494949" />
    <rect x=".500" y="9.500" width="6" height="5" fill="#494949" />
  </>
);

const dock: { label: string; active?: boolean; art: ReactNode }[][] = [
  [
    {
      label: "Seiten",
      art: (
        <>
          <path d="M0 7 L4 3 H7.500 V16 H0 Z M10.500 3 H14 L18 7 V16 H10.500 Z" fill="#c4c4c4" stroke="none" />
          <path d="M9 1 V18" stroke="#ddd" />
          <path d="M1 7.500 H5 V3 M17 7.500 H13 V3" stroke="#494949" />
        </>
      ),
    },
    {
      label: "Ebenen",
      art: (
        <>
          <path d="M9 1 L17.500 6.500 L9 12 L.5 6.500 Z" fill="#c4c4c4" stroke="none" />
          <path d="M1 11 L9 16 L17 11" strokeWidth="2.200" />
        </>
      ),
    },
    {
      label: "Verknüpfungen",
      art: <path d="M7.500 6.500 V5 H4 Q1 5 1 9 Q1 13 4 13 H7.500 V11 M10.500 7 V5 H14 Q17 5 17 9 Q17 13 14 13 H10.500 V11.500 M5 9 H13" strokeWidth="2" />,
    },
  ],
  [
    {
      label: "Kontur",
      art: (
        <>
          <path d="M0 3.500 H18" strokeWidth="1" />
          <path d="M0 8 H18" strokeWidth="2" />
          <path d="M0 13.500 H18" strokeWidth="3" />
        </>
      ),
    },
    {
      label: "Farbfelder",
      art: (
        <>
          <rect x="1" y="4" width="16" height="10" fill="#6a6a6a" />
          <rect x="1.500" y="4.500" width="5" height="4" fill="#222" stroke="none" />
          <rect x="12" y="4.500" width="5" height="4" fill="#999" stroke="none" />
          <path d="M6.500 4 V14 M11.500 4 V14 M1 9 H17" />
        </>
      ),
    },
    {
      label: "Verlauf",
      art: (
        <>
          <defs>
            <linearGradient id="dockGradient">
              <stop offset="0" stopColor="#333" />
              <stop offset=".8" stopColor="#c9c9c9" />
            </linearGradient>
          </defs>
          <rect x=".5" y="3.500" width="17" height="11" fill="url(#dockGradient)" />
        </>
      ),
    },
  ],
  [
    {
      label: "Objektformate",
      art: (
        <>
          <rect x="4" y="2" width="13" height="13" fill="#808080" strokeDasharray="3 1" />
          {stack}
        </>
      ),
    },
  ],
  [
    {
      label: "Zeichenformate",
      art: (
        <>
          <path d="M8.500 12.500 L12.500 2 H13.500 L17.500 12.500 M10 9 H16" strokeWidth="1.800" />
          {stack}
        </>
      ),
    },
    {
      label: "Absatzformate",
      active: true,
      art: (
        <>
          <path d="M12 2 H10 A3.500 3.500 0 0 0 10 9 H12 Z" fill="#c9c9c9" stroke="none" />
          <path d="M12.500 2 V15 M16 2 V15 M9 2 H17" strokeWidth="1.500" />
          {stack}
        </>
      ),
    },
  ],
  [
    {
      label: "Tabellenformate",
      art: (
        <>
          <path d="M3 9 V2 H17 V14 H8 M3 5.500 H17 M8 8.500 H17 M8 11.500 H17" strokeWidth="1.300" />
          {stack}
        </>
      ),
    },
    {
      label: "Zellenformate",
      art: (
        <>
          <path d="M3 9 V2 H17 V14 H8 M3 5.500 H17" strokeWidth="1.300" />
          <rect x="8" y="7" width="8" height="6" fill="#c9c9c9" />
          {stack}
        </>
      ),
    },
  ],
  [
    {
      label: "Skripte",
      art: (
        <path
          d="M14.500 3.500 Q11 .5 7 3.500 Q3.500 7 8 9 Q10 10 8.500 12 Q6 14 3 13 Q4 17.500 9 17 Q15.500 16 15 11 Q14.500 8.500 11.500 7.500 Q10 6.500 11 5.500 Q12.500 4 14.500 5.500 Z"
          fill="#c4c4c4"
          stroke="none"
        />
      ),
    },
  ],
];

function Dock() {
  return (
    <aside className="flex w-[168px] shrink-0 flex-col border-r border-l-[3px] border-[#222] bg-[#484848]">
      <div className="flex h-3 items-center justify-end bg-[#2f2f2f] pr-1">
        <Tri dir="left" className="h-[6px] w-[5px]" />
        <Tri dir="left" className="h-[6px] w-[5px]" />
      </div>
      {dock.map((group, i) => (
        <section key={i} className="flex flex-col items-center border-t border-b border-t-[#5c5c5c] border-b-[#262626] bg-[#4a4a4a] pt-[2px] pb-[3px]">
          <Grip />
          <div className="mt-[2px] flex w-full flex-col px-1">
            {group.map((item) => (
              <button
                key={item.label}
                className={clsx(
                  "my-[2px] flex h-6 items-center gap-2 rounded-[3px] pl-[7px] text-[10px] font-semibold text-[#d8d8d8]",
                  item.active && "bg-[#313131] shadow-[0_0_0_1px_#2a2a2a_inset]",
                )}
              >
                <Icon w={18} h={18}>
                  {item.art}
                </Icon>
                {item.label}
              </button>
            ))}
          </div>
        </section>
      ))}
    </aside>
  );
}

/* ---------- floating windows ---------- */

function StylesPanel() {
  return (
    <section className="absolute top-[260px] right-[170px] flex h-[448px] w-[208px] flex-col border border-[#222] bg-[#4a4a4a] text-[9px] text-[#cfcfcf] shadow-[0_0_4px_rgba(0,0,0,0.5)]">
      <div className="flex h-5 shrink-0 items-stretch border-t-2 border-[#222] bg-[#303030] text-[10px] font-semibold">
        <button className="w-[54px] overflow-hidden pl-[7px] text-left whitespace-nowrap text-[#8f8f8f]">Zeichenfo</button>
        <button className="flex w-[88px] items-center gap-[3px] bg-[#4a4a4a] pl-1 text-[#e0e0e0]">
          <Icon w={5} h={9}>
            <path d="M.5 3.500 L2.500 1 L4.500 3.500 M.5 5.500 L2.500 8 L4.500 5.500" />
          </Icon>
          Absatzformate
        </button>
        <div className="ml-auto flex items-center pr-[3px]">
          <Tri dir="right" className="h-2 w-[5px]" />
          <Tri dir="right" className="h-2 w-[5px]" />
          <Divider className="mx-[6px] my-1" />
          <MenuLines />
        </div>
      </div>
      <div className="flex h-[21px] shrink-0 items-center justify-between pr-1 pl-[2px]">
        Grundtext Einzug <Bolt />
      </div>
      <div className="flex min-h-0 flex-1 border-t border-[#2c2c2c]">
        <ul className="flex-1 overflow-hidden">
          {styles.map((s) => (
            <li
              key={s.name}
              className={clsx(
                "flex h-5 items-center justify-between border-b border-[#333] pr-[19px] pl-8",
                s.active && "bg-[#455364] text-[10px] font-semibold text-white",
              )}
            >
              <span>{s.name}</span>
              <span>{s.keys}</span>
            </li>
          ))}
        </ul>
        <div className="flex w-3 flex-col items-center justify-between border-l border-[#2c2c2c] bg-[#323232] py-1">
          <Tri dir="up" />
          <div className="mt-1 -mb-3 h-[300px] w-full bg-[#8f8f8f]" />
          <Tri dir="down" />
        </div>
      </div>
      <div className="flex h-[18px] shrink-0 items-center border-t border-[#2c2c2c] pr-0 pl-[7px]">
        <Icon w={16} h={12}>
          <path d="M3.500 11 Q0 10.500 .5 7.500 Q1 5.500 3.500 5.500 Q4 1 8 1 Q11.500 1 12 5 Q15.500 5 15.500 8 Q15.500 11 12.500 11 Z" fill="#c4c4c4" stroke="none" />
          <path d="M4 7 H10 M8 4.500 L11 7 L8 9.500" stroke="#444" strokeWidth="1.500" />
        </Icon>
        <span className="ml-[55px]">
          <Folder />
        </span>
        <span className="ml-[15px] flex items-center opacity-40">
          <Pilcrow />
          <Icon w={8} h={9}>
            <path d="M0 8 L8 1 M2 2 L6 7 M1 4.500 H7" />
          </Icon>
        </span>
        <Icon w={12} h={11} className="ml-[15px]">
          <path d="M1 0 H11 V11 H6 V5 H1 Z M0 7 H4 V11 Z" fill="#d0d0d0" stroke="none" />
        </Icon>
        <Icon w={12} h={12} className="ml-[17px]">
          <path d="M1 2.500 H11 M4 2 V.5 H8 V2" />
          <path d="M2.500 4.500 H9.500 L9 11.500 H3 Z M5 5 V11 M7 5 V11" />
        </Icon>
        <Icon w={10} h={10} className="mt-[6px] ml-auto">
          <path
            d="M8 1 h1 M6 3 h1 M8 3 h1 M4 5 h1 M6 5 h1 M8 5 h1 M2 7 h1 M4 7 h1 M6 7 h1 M8 7 h1 M0 9 h1 M2 9 h1 M4 9 h1 M6 9 h1 M8 9 h1"
            stroke="#151515"
          />
        </Icon>
      </div>
      <div className="flex h-2 shrink-0 items-center justify-center border-t border-[#2c2c2c]">
        <Grip />
      </div>
    </section>
  );
}

function QuickApplyDialog() {
  return (
    <section
      role="dialog"
      aria-label="Schnell anwenden"
      className="absolute top-[166px] left-[294px] w-[376px] rounded-[2px] border border-[#333] bg-[linear-gradient(110deg,#f0f0f0,#c9c9c9_35%,#e6e6e6_60%,#dcdcdc)] px-[5px] pb-[5px] shadow-[0_4px_14px_4px_rgba(0,0,0,0.7),inset_0_0_0_1px_#fff]"
    >
      <div className="flex h-[23px] items-center justify-between pt-[2px] pr-[1px] pl-[2px] text-[11px] text-[#151515]">
        <h1>Schnell anwenden</h1>
        <button aria-label="Schließen" className="flex h-4 w-4 items-center justify-center rounded-[2px] border border-[#8c3a35] bg-linear-to-b from-[#e09a92] via-[#c4473d] to-[#d8776b]">
          <Icon w={7} h={6}>
            <path d="M1 .5 L6 5.500 M6 .5 L1 5.500" stroke="#fff" strokeWidth="1.600" />
          </Icon>
        </button>
      </div>
      <div className="border border-black bg-[#484848] p-[1px] outline outline-[#fff] -outline-offset-2">
        <div className="flex h-[28px] items-center pr-[12px] pb-[1px] pl-[10px]">
          <button aria-label="Sofort anwenden" className="flex h-5 w-[22px] items-center justify-center border border-[#515151]">
            <Bolt />
          </button>
          <button aria-label="Filter" className="ml-[2px] flex h-5 w-[18px] items-center justify-center border border-[#515151]">
            <Tri dir="down" className="h-3 w-3" />
          </button>
          <input
            aria-label="Suchen"
            className="ml-2 h-[21px] min-w-0 flex-1 border border-[#c07c35] bg-[#9b9b98] shadow-[inset_0_0_0_1px_#3a2d1e] outline-none"
          />
        </div>
        <div className="flex">
          <ul className="flex-1 px-[1px] text-[9px] text-[#cfcfcf]">
            {quickApply.map((q) => (
              <li key={q.name} className="flex h-5 items-center border-b border-[#2f2f2f] last:border-b-0">
                <span className="flex w-[35px] justify-center pl-[13px]">
                  {q.kind === "para" && <Pilcrow />}
                  {q.kind === "char" && <span className="text-[13px] leading-none font-semibold">A</span>}
                  {q.kind === "folder" && <Folder />}
                </span>
                {q.name}
              </li>
            ))}
          </ul>
          <div className="flex w-3 flex-col items-center justify-between bg-[#2f2f2f] py-1">
            <Tri dir="up" />
            <div className="mt-auto mb-1 h-[37px] w-full bg-[#8f8f8f]" />
            <Tri dir="down" />
          </div>
        </div>
      </div>
    </section>
  );
}

function Pointer() {
  return (
    <svg className="absolute top-[217px] left-[395px] h-[20px] w-[14px]" viewBox="0 0 14 20" aria-hidden>
      <path d="M1 1 V15.500 L4.500 12.500 L7 18.500 L9.500 17.500 L7 11.500 H11.500 Z" fill="#fff" stroke="#333" strokeWidth=".8" />
    </svg>
  );
}

function Watermark() {
  return (
    <div className="absolute bottom-[12px] left-[31px] flex items-end opacity-50">
      <Icon w={38} h={36}>
        <path
          d="M17 28 Q0 14 1 3 Q10 0 18 27 M18 28 Q22 10 36 8 Q36 20 19 28 M17 29 Q4 24 5 32 Q12 37 18 29 M19 29 Q20 35 23 31 Q24 28 19 29"
          stroke="#fff"
          strokeWidth="2"
        />
      </Icon>
      <span className="-ml-1 font-['Liberation_Sans',sans-serif] text-[12px] font-bold text-white [text-shadow:0_0_2px_#777]">PSD-Tutorials.de</span>
    </div>
  );
}

export default function App() {
  return (
    <div className="relative flex h-screen w-full flex-col overflow-hidden border-r-2 border-[#101008] bg-[#434343] font-['Open_Sans',sans-serif] select-none">
      <TitleBar />
      <MenuBar />
      <ControlBar />
      <div className="mr-[3px] ml-1 flex min-h-0 flex-1">
        <ToolBox />
        <DocumentWindow />
        <Dock />
      </div>
      <div className="h-[5px] shrink-0 border-t border-b-2 border-t-[#222] border-b-black bg-[#434343]" />
      <StylesPanel />
      <QuickApplyDialog />
      <Pointer />
      <Watermark />
    </div>
  );
}
